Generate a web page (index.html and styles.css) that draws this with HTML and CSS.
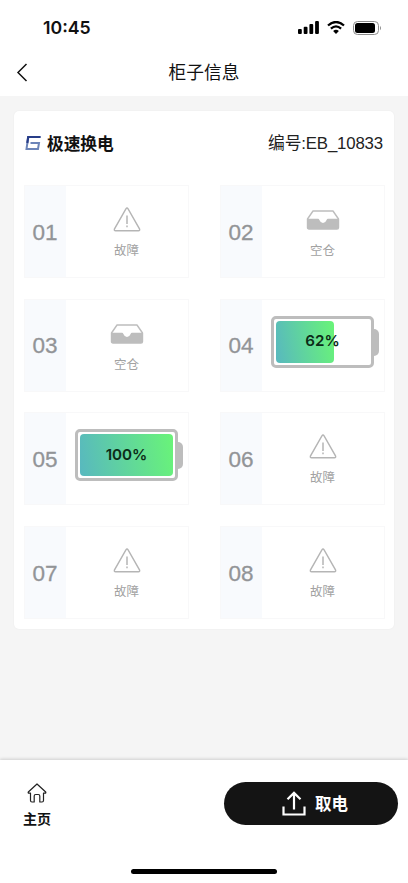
FILE: index.html
```html
<!DOCTYPE html>
<html lang="zh-CN">
<head>
<meta charset="utf-8">
<meta name="viewport" content="width=device-width, initial-scale=1">
<title>柜子信息</title>
<link rel="stylesheet" href="styles.css">
</head>
<body>
<svg width="0" height="0" class="sprite" aria-hidden="true">
  <symbol id="fault" viewBox="0 0 28 25"><path d="M12.9 1.8Q14 .3 15.100 1.800L26.600 22.100Q27 23.700 25.500 23.700H2.500Q1 23.700 1.400 22.100Z" fill="none" stroke="#b5b5b5" stroke-width="1.400"/><path d="M14 8.500V17M14 18.500V20.200" stroke="#b0b0b0" stroke-width="1.400"/></symbol>
  <symbol id="empty" viewBox="0 0 33 20"><path d="M6.500 1H26.500L32 9V17.500Q32 19 30.500 19H2.500Q1 19 1 17.500V9Z" fill="#fff" stroke="#bdbdbd" stroke-width="1.400" stroke-linejoin="round"/><path d="M1 8.700H11.500Q12.500 8.700 12.900 10Q14 13 16.500 13T20.100 10Q20.500 8.700 21.500 8.700H32V17.500Q32 19 30.500 19H2.500Q1 19 1 17.500Z" fill="#bdbdbd"/></symbol>
</svg>
<div class="app">
  <header class="top">
    <div class="status">
      <span class="time">10:45</span>
      <div class="signals">
        <svg width="21" height="13" viewBox="0 0 21 13"><rect x="0" y="8" width="3.800" height="5" rx="1"/><rect x="5.700" y="5.700" width="3.800" height="7.300" rx="1"/><rect x="11.400" y="3" width="3.800" height="10" rx="1"/><rect x="17.100" y="0" width="3.800" height="13" rx="1"/></svg>
        <svg class="wifi" width="18" height="13" viewBox="0 0 18 13"><path d="M1 4.500Q9-2.500 17 4.500M3.900 7.600Q9 3.200 14.100 7.600" fill="none" stroke="#000" stroke-width="2.300"/><path d="M6.100 9.900Q9 7.700 11.900 9.900L9 13Z"/></svg>
        <svg width="29" height="14" viewBox="0 0 29 14"><rect x=".5" y=".5" width="25" height="13" rx="4" fill="none" stroke="#8c8c8c"/><rect x="2" y="2" width="20" height="10" rx="2.500"/><path d="M27 4.700Q29 7 27 9.300Z" fill="#8c8c8c"/></svg>
      </div>
    </div>
    <div class="nav">
      <svg class="back" width="12" height="19" viewBox="0 0 12 19"><path d="M10.500 1L2 9.500L10.500 18" fill="none" stroke="#111" stroke-width="1.500"/></svg>
      <h1>柜子信息</h1>
    </div>
  </header>
  <main class="card">
    <div class="card-head">
      <div class="brand">
        <svg width="16" height="16" viewBox="0 0 16 16"><path d="M15.500 2H3.200L1.500 14H13L14 8H5.500" fill="none" stroke="#6c84b8" stroke-width="2"/><path d="M15.500 2H3.200L2.300 8" fill="none" stroke="#283d88" stroke-width="2.200"/></svg>
        <span>极速换电</span>
      </div>
      <span class="serial">编号:EB_10833</span>
    </div>
    <div class="slots">
      <div class="slot"><div class="num">01</div><div class="state"><svg class="i-fault"><use href="#fault"/></svg><span>故障</span></div></div>
      <div class="slot"><div class="num">02</div><div class="state"><svg class="i-empty"><use href="#empty"/></svg><span>空仓</span></div></div>
      <div class="slot"><div class="num">03</div><div class="state"><svg class="i-empty"><use href="#empty"/></svg><span>空仓</span></div></div>
      <div class="slot"><div class="num">04</div><div class="power"><div class="battery"><div class="level" style="width:62%"></div><b class="pct">62%</b></div><i class="tip"></i></div></div>
      <div class="slot"><div class="num">05</div><div class="power"><div class="battery"><div class="level" style="width:100%"></div><b class="pct">100%</b></div><i class="tip"></i></div></div>
      <div class="slot"><div class="num">06</div><div class="state"><svg class="i-fault"><use href="#fault"/></svg><span>故障</span></div></div>
      <div class="slot"><div class="num">07</div><div class="state"><svg class="i-fault"><use href="#fault"/></svg><span>故障</span></div></div>
      <div class="slot"><div class="num">08</div><div class="state"><svg class="i-fault"><use href="#fault"/></svg><span>故障</span></div></div>
    </div>
  </main>
  <footer class="bottom">
    <div class="actions">
      <a class="home">
        <svg width="20" height="20" viewBox="0 0 20 20"><path d="M10 1L1.300 9Q.8 10.200 2 10.200H3.500V17.500Q3.500 19 5 19H7.200V13Q7.200 11.500 8.700 11.500H11.300Q12.800 11.500 12.800 13V19H15Q16.500 19 16.500 17.500V10.200H18Q19.200 10.200 18.700 9Z" fill="none" stroke="#222" stroke-width="1.200" stroke-linejoin="round"/></svg>
        <span>主页</span>
      </a>
      <button class="take">
        <svg width="24" height="26" viewBox="0 0 24 26"><path d="M1.500 15.500V23.500H22.500V15.500M12 18.500V2M5.500 8.300L12 1.900L18.500 8.300" fill="none" stroke="#fff" stroke-width="2.200"/></svg>
        <span>取电</span>
      </button>
    </div>
    <div class="indicator"></div>
  </footer>
</div>
</body>
</html>
```
FILE: styles.css
```css
* { box-sizing: border-box; }
body {
  margin: 0;
  background: #f5f5f5;
  color: #111;
  font-family: Inter, "Noto Sans CJK SC", sans-serif;
}
svg { display: block; flex: none; }
.sprite { position: absolute; }
.app { height: 883px; display: flex; flex-direction: column; overflow: hidden; }

.top { height: 96px; background: #fff; flex: none; }
.status {
  height: 48px;
  padding: 7px 26px 0 43px;
  display: flex;
  align-items: center;
  justify-content: space-between;
}
.time { font-size: 17.700px; font-weight: 600; line-height: 24px; }
.signals { display: flex; align-items: center; gap: 8px; }
.nav {
  height: 48px;
  padding: 1px 16px 0;
  display: grid;
  grid-template-columns: 12px 1fr 12px;
  align-items: center;
}
.nav h1 { margin: 0; padding-top: 1px; text-align: center; font-size: 17.700px; line-height: 24px; font-weight: 400; }

.card {
  height: 518px;
  flex: none;
  margin: 15px 14px 0;
  padding: 0 10px;
  background: #fff;
  border-radius: 5px;
  box-shadow: 0 0 2px rgba(0, 0, 0, .05);
}
.card-head {
  height: 74px;
  padding: 0 1px 10px;
  display: flex;
  align-items: center;
  justify-content: space-between;
}
.brand { display: flex; align-items: center; gap: 6px; font-size: 16.700px; font-weight: 700; }
.serial {
  padding-top: 2px;
  font-family: "Liberation Sans", "Noto Sans CJK SC", sans-serif;
  font-size: 16.800px;
  line-height: 24px;
  letter-spacing: -.15px;
  color: #222;
}
.slots {
  display: grid;
  grid-template-columns: 165px 165px;
  grid-auto-rows: 93px;
  row-gap: 20.700px;
  column-gap: 31px;
}
.slot { display: flex; border: 1px solid #f8f8f9; }
.num {
  width: 41px;
  padding: 2px 1px 0 0;
  background: #f8fafd;
  color: #929497;
  font-family: "Liberation Sans", Arial, sans-serif;
  font-size: 22.500px;
  -webkit-text-stroke: .3px #929497;
  display: flex;
  align-items: center;
  justify-content: center;
}
.state {
  flex: 1;
  padding: 21px 1px 0 0;
  display: flex;
  flex-direction: column;
  align-items: center;
  font-size: 12.500px;
  line-height: 18px;
  color: #a2a2a2;
}
.i-fault { width: 28px; height: 25px; margin-bottom: 10px; }
.i-empty { width: 34px; height: 20px; margin: 3px 0 12px; }
.power { padding: 16px 0 0 9px; display: flex; }
.battery {
  position: relative;
  width: 103px;
  height: 52px;
  padding: 2px;
  border: 3px solid #bdbdbd;
  border-radius: 5px;
}
.level { height: 100%; border-radius: 4px; background: linear-gradient(80deg, #58b8bf, #69f478); }
.pct {
  position: absolute;
  inset: 0 0 2px;
  display: flex;
  align-items: center;
  justify-content: center;
  font-size: 15.200px;
  font-weight: 600;
  color: #0c2c18;
}
.tip { width: 5px; height: 27px; margin-top: 13px; background: #bdbdbd; border-radius: 0 5px 5px 0; }

.bottom {
  height: 123px;
  flex: none;
  margin-top: auto;
  background: #fff;
  box-shadow: 0 -1px 3px rgba(0, 0, 0, .16);
  display: flex;
  flex-direction: column;
  align-items: center;
  justify-content: space-between;
  padding: 22px 0 9px;
}
.actions { width: 100%; padding: 0 10px 0 23px; display: flex; justify-content: space-between; }
.home {
  display: flex;
  flex-direction: column;
  align-items: center;
  gap: 6px;
  padding-top: 1px;
  font-size: 14px;
  font-weight: 600;
  line-height: 20px;
}
.take {
  width: 174px;
  height: 43px;
  padding: 0 0 0 8px;
  border: 0;
  border-radius: 22px;
  background: #141414;
  color: #fff;
  font: 600 16.500px/24px Inter, "Noto Sans CJK SC", sans-serif;
  display: flex;
  align-items: center;
  justify-content: center;
  gap: 9px;
}
.indicator { width: 146px; height: 5px; border-radius: 3px; background: #000; }
```
